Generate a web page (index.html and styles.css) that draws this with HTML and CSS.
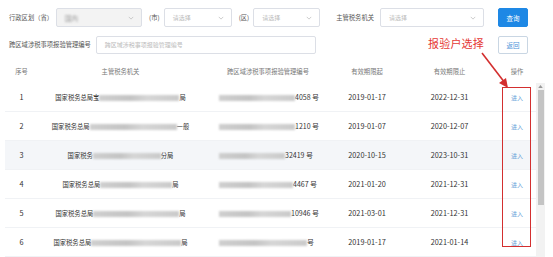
FILE: index.html
```html
<!DOCTYPE html>
<html>
<head>
<meta charset="utf-8" />
<title>报验户选择</title>
<link rel="stylesheet" href="styles.css">
</head>
<body>
<div class="page">
  <div class="filters">
    <div class="filter-row">
      <span class="label">行政区划（省）</span>
      <div class="select disabled select-prov"><span class="blur-text">国内</span><svg class="chev" viewBox="0 0 8 5"><path d="M1 1l3 3 3-3"/></svg></div>
      <span class="label sub">(市)</span>
      <div class="select select-city"><span class="ph">请选择</span><svg class="chev" viewBox="0 0 8 5"><path d="M1 1l3 3 3-3"/></svg></div>
      <span class="label sub">(区)</span>
      <div class="select select-dist"><span class="ph">请选择</span><svg class="chev" viewBox="0 0 8 5"><path d="M1 1l3 3 3-3"/></svg></div>
      <span class="label org">主管税务机关</span>
      <div class="select select-org"><span class="ph">请选择</span><svg class="chev" viewBox="0 0 8 5"><path d="M1 1l3 3 3-3"/></svg></div>
      <button class="btn btn-primary">查询</button>
    </div>
    <div class="filter-row">
      <span class="label">跨区域涉税事项报验管理编号</span>
      <div class="input"><span class="ph">跨区域涉税事项报验管理编号</span></div>
      <button class="btn btn-plain">返回</button>
    </div>
  </div>

  <div class="grid-wrap">
    <table class="list">
      <colgroup>
        <col class="c-no"><col class="c-org"><col class="c-code"><col class="c-start"><col class="c-end"><col class="c-op">
      </colgroup>
      <thead>
        <tr><th>序号</th><th>主管税务机关</th><th>跨区域涉税事项报验管理编号</th><th>有效期限起</th><th>有效期限止</th><th>操作</th></tr>
      </thead>
      <tbody>
        <tr>
          <td>1</td>
          <td class="org-cell">国家税务总局宝<span class="blur" style="width:80px"></span>局</td>
          <td class="code-cell"><span class="blur" style="width:76px"></span>4058 号</td>
          <td>2019-01-17</td><td>2022-12-31</td><td><a class="enter">进入</a></td>
        </tr>
        <tr>
          <td>2</td>
          <td class="org-cell">国家税务总局<span class="blur" style="width:87px"></span>一般</td>
          <td class="code-cell"><span class="blur" style="width:76px"></span>1210 号</td>
          <td>2019-01-07</td><td>2020-12-07</td><td><a class="enter">进入</a></td>
        </tr>
        <tr class="hover">
          <td>3</td>
          <td class="org-cell">国家税务<span class="blur" style="width:68px"></span>分局</td>
          <td class="code-cell"><span class="blur" style="width:66px"></span>32419 号</td>
          <td>2020-10-15</td><td>2023-10-31</td><td><a class="enter">进入</a></td>
        </tr>
        <tr>
          <td>4</td>
          <td class="org-cell">国家税务总局<span class="blur" style="width:72px"></span>局</td>
          <td class="code-cell"><span class="blur" style="width:74px"></span>4467 号</td>
          <td>2021-01-20</td><td>2021-12-31</td><td><a class="enter">进入</a></td>
        </tr>
        <tr>
          <td>5</td>
          <td class="org-cell">国家税务总局<span class="blur" style="width:86px"></span>局</td>
          <td class="code-cell"><span class="blur" style="width:72px"></span>10946 号</td>
          <td>2021-03-01</td><td>2021-12-31</td><td><a class="enter">进入</a></td>
        </tr>
        <tr>
          <td>6</td>
          <td class="org-cell">国家税务总局<span class="blur" style="width:90px"></span>局</td>
          <td class="code-cell"><span class="blur" style="width:88px"></span>号</td>
          <td>2019-01-17</td><td>2021-01-14</td><td><a class="enter">进入</a></td>
        </tr>
      </tbody>
    </table>
    <div class="scrollbar">
      <svg class="scroll-up" viewBox="0 0 6 4"><path d="M0 4L3 0 6 4z"/></svg>
      <div class="thumb"></div>
    </div>
  </div>

  <!-- 标注 -->
  <div class="note">报验户选择</div>
  <svg class="arrow" viewBox="0 0 40 40"><path class="arrow-line" d="M6 2L29 32"/><path class="arrow-head" d="M32 37L23 32 30 27z"/></svg>
  <div class="mark"></div>
</div>
</body>
</html>
```

FILE: styles.css
```css
html, body {
  margin: 0;
  background: #fff;
}
body {
  font-family: "Noto Sans CJK SC", "Noto Sans", sans-serif;
  color: #333;
}
.page {
  position: relative;
  width: 553px;
  height: 257px;
  padding: 8px 8px 0 5px;
  box-sizing: border-box;
  overflow: hidden;
}
.filters {
  padding: 0 17px 0 4px;
}
.filter-row {
  display: flex;
  align-items: center;
  height: 19px;
}
.filter-row + .filter-row {
  margin-top: 8px;
}
.label {
  font-size: 6.3px;
  color: #555;
  white-space: nowrap;
}
.label.sub {
  margin: 0 4px 0 7px;
}
.label.org {
  margin: 0 6px 0 16px;
}
.select, .input {
  display: flex;
  align-items: center;
  justify-content: space-between;
  box-sizing: border-box;
  height: 19px;
  padding: 0 7px 0 8px;
  border: 1px solid #dcdfe6;
  border-radius: 2px;
  background: #fff;
}
.select.disabled {
  background: #f3f3f3;
}
.select-prov {
  width: 86px;
  margin-left: 3px;
}
.select-city {
  width: 68px;
}
.select-dist {
  width: 67px;
}
.select-org {
  width: 104px;
}
.input {
  width: 220px;
  height: 18px;
  margin-left: 5px;
}
.ph {
  font-size: 6px;
  color: #bbb;
  white-space: nowrap;
}
.blur-text {
  font-size: 6.5px;
  color: #999;
  filter: blur(0.8px);
}
.chev {
  width: 6px;
  height: 4px;
  fill: none;
  stroke: #bbb;
  stroke-width: 1;
}
.btn {
  margin-left: auto;
  width: 30px;
  height: 19px;
  padding: 0;
  border-radius: 2px;
  font-family: inherit;
  font-size: 6.5px;
}
.btn-primary {
  border: 1px solid #1e88e5;
  background: #1e88e5;
  color: #fff;
}
.btn-plain {
  height: 18px;
  border: 1px solid #c9d6e3;
  background: #fff;
  color: #4a90d9;
}
.grid-wrap {
  display: flex;
  margin-top: 5px;
}
.list {
  flex: 1;
  border-collapse: collapse;
  table-layout: fixed;
}
.c-no { width: 33px; }
.c-org { width: 165px; }
.c-code { width: 130px; }
.c-start { width: 68px; }
.c-end { width: 97px; }
.c-op { width: 38px; }
.list th {
  height: 24px;
  padding: 0;
  font-size: 6.3px;
  font-weight: normal;
  color: #777;
  text-align: center;
}
.list td {
  height: 28px;
  padding: 0;
  border-bottom: 1px solid #f0f2f5;
  font-size: 7.3px;
  color: #333;
  text-align: center;
  white-space: nowrap;
}
.list tr.hover td {
  background: #f4f6f9;
}
.org-cell {
  font-size: 6.3px !important;
}
.code-cell {
  padding-left: 16px !important;
  text-align: left !important;
  font-size: 7px !important;
}
.blur {
  display: inline-block;
  height: 6px;
  vertical-align: middle;
  background: linear-gradient(90deg, #cfcfcf 0%, #c4c4c4 40%, #d6d6d6 60%, #cacaca 100%);
  filter: blur(1.2px);
}
.enter {
  font-size: 6px;
  color: #6aa3d8;
}
.scrollbar {
  width: 9px;
  margin-top: 24px;
  background: #f2f2f2;
}
.scroll-up {
  display: block;
  width: 5px;
  height: 3px;
  margin: 2px auto 0;
  fill: #999;
}
.thumb {
  width: 6px;
  height: 115px;
  margin: 2px auto 0;
  background: #c4c4c4;
}
.note {
  position: absolute;
  left: 428px;
  top: 35px;
  font-size: 11px;
  color: #e53935;
  letter-spacing: 0.2px;
}
.arrow {
  position: absolute;
  left: 476px;
  top: 51px;
  width: 40px;
  height: 40px;
}
.arrow-line {
  stroke: #d32f2f;
  stroke-width: 1.6;
}
.arrow-head {
  fill: #d32f2f;
}
.mark {
  position: absolute;
  left: 502px;
  top: 87px;
  width: 29px;
  height: 160px;
  box-sizing: border-box;
  border: 1.5px solid #d32f2f;
}
```
